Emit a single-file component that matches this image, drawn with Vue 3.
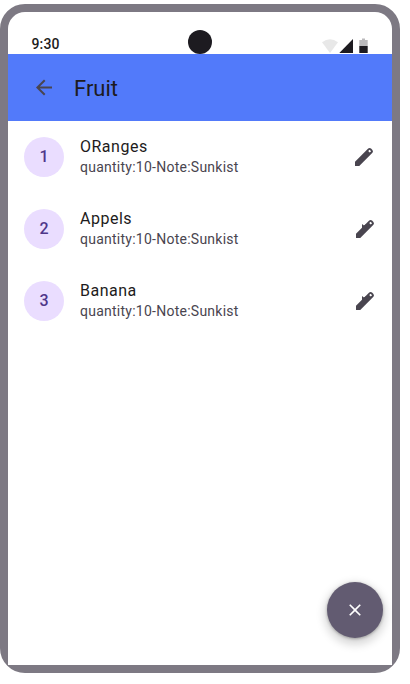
<script setup>
const items = [
  { id: 1, name: 'ORanges', detail: 'quantity:10-Note:Sunkist' },
  { id: 2, name: 'Appels', detail: 'quantity:10-Note:Sunkist' },
  { id: 3, name: 'Banana', detail: 'quantity:10-Note:Sunkist' },
]
</script>

<template>
  <div class="phone">
    <div class="screen">
      <div class="status">
        <span class="time">9:30</span>
        <span class="camera"></span>
        <svg class="signals" width="48" height="17" viewBox="0 0 48 17">
          <path d="M0 4.2Q8-1.6 16 4.2L8 15Z" fill="#e8e8e8" />
          <path d="M17.3 15H31V1Z" fill="#1d1b20" />
          <path d="M37.3 2h2.7V.5h3V2h2.7v6h-8.4Z" fill="#bbbabc" />
          <path d="M37.3 8h8.4v7h-8.4Z" fill="#1d1b20" />
        </svg>
      </div>
      <header class="bar">
        <svg width="24" height="24" viewBox="0 0 24 24">
          <path d="M7.825 12.5L13.425 18.1L12 19.5L4 11.5L12 3.5L13.425 4.9L7.825 10.5H20V12.5Z" fill="#49454f" />
        </svg>
        <h1>Fruit</h1>
      </header>
      <ul class="list">
        <li v-for="item in items" :key="item.id" class="row">
          <span class="avatar">{{ item.id }}</span>
          <div class="text">
            <div class="name">{{ item.name }}</div>
            <div class="detail">{{ item.detail }}</div>
          </div>
          <svg class="edit" :class="{ notched: item.id > 1 }" width="24" height="24" viewBox="0 0 24 24">
            <path fill-rule="evenodd" d="M3 21V16.75L16.2 3.575Q17.6 2.4 19.05 3.575L20.425 5Q21.6 6.4 20.425 7.8L7.25 21ZM17.6 4.7L16.2 6.1L17.7 7.6L19.1 6.2Z" fill="#49454f" />
            <path v-if="item.id > 1" d="M9 7L11 8.5L13.5 7V11H9Z" fill="#49454f" />
          </svg>
        </li>
      </ul>
      <button class="fab" aria-label="Close">
        <svg width="20" height="20" viewBox="0 0 24 24">
          <path d="M6.4 19L5 17.6L10.6 12L5 6.4L6.4 5L12 10.6L17.6 5L19 6.4L13.4 12L19 17.6L17.6 19L12 13.4Z" fill="#fff" />
        </svg>
      </button>
    </div>
  </div>
</template>

<style>
body {
  background: #fff;
}
</style>

<style scoped>
.phone {
  box-sizing: border-box;
  width: 400px;
  height: 669px;
  margin-top: 4px;
  border: 8px solid #7d7983;
  border-radius: 25px;
  background: #7d7983;
  font-family: Roboto, sans-serif;
}
.screen {
  position: relative;
  height: 653px;
  background: #fff;
  border-radius: 17px 17px 0 0;
}
.status {
  display: grid;
  grid-template-columns: 156.5px 134.5px 48px;
  box-sizing: border-box;
  height: 42px;
  padding-left: 23.5px;
}
.time {
  padding-top: 22px;
  font-size: 14px;
  line-height: 20px;
  font-weight: 500;
  letter-spacing: 0.14px;
  color: #1d1b20;
}
.camera {
  width: 24px;
  height: 24px;
  margin-top: 18px;
  margin-left: -0.5px;
  border-radius: 50%;
  background: #1d1b20;
}
.signals {
  margin-top: 26px;
  margin-left: -0.5px;
}
.bar {
  display: flex;
  box-sizing: border-box;
  align-items: flex-start;
  height: 67px;
  padding: 22px 24px 0;
  gap: 18px;
  background: #527afa;
}
h1 {
  margin: -1px 0 0;
  font-size: 22px;
  line-height: 28px;
  font-weight: 400;
  color: #1d1b20;
}
.list {
  margin: 0;
  padding: 0;
  list-style: none;
}
.row {
  display: flex;
  box-sizing: border-box;
  height: 72px;
  align-items: center;
  padding: 0 16px;
  gap: 16px;
}
.avatar {
  width: 40px;
  height: 40px;
  border-radius: 50%;
  background: #eaddff;
  color: #4f378a;
  font-size: 16px;
  line-height: 40px;
  font-weight: 500;
  text-align: center;
}
.text {
  flex: 1;
  padding-bottom: 3px;
}
.name {
  font-size: 16px;
  line-height: 24px;
  letter-spacing: 0.5px;
  color: #1d1b20;
}
.detail {
  font-size: 14px;
  line-height: 17px;
  letter-spacing: 0.25px;
  color: #49454f;
}
.notched {
  margin-right: -1px;
}
.fab {
  position: absolute;
  right: 9px;
  bottom: 27px;
  display: flex;
  align-items: center;
  justify-content: center;
  width: 56px;
  height: 56px;
  padding: 0;
  border: 0;
  border-radius: 50%;
  background: #625b71;
  box-shadow: 0 1px 3px rgba(0, 0, 0, 0.3), 0 4px 8px 3px rgba(0, 0, 0, 0.15);
}
</style>
